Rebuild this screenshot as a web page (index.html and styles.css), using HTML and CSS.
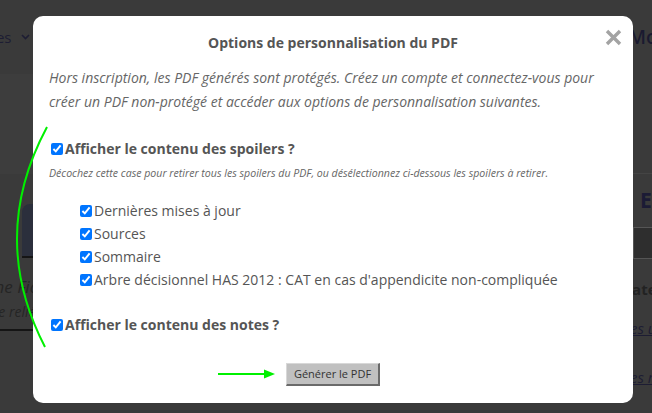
FILE: index.html
```html
<!DOCTYPE html>
<html lang="fr">

<head>
    <meta charset="UTF-8">
    <meta name="viewport" content="width=device-width, initial-scale=1.0">
    <title>Options PDF</title>
    <link rel="stylesheet" href="styles.css">
</head>

<body>
    <!-- page behind the modal (dimmed) -->
    <div class="page">
        <header class="topbar">
            <span class="nav-item">Fiches
                <svg width="9" height="6" viewBox="0 0 9 6"><path d="M1 1l3.5 3.5L8 1" fill="none" stroke="#1d1d33" stroke-width="1.6"/></svg>
            </span>
            <span class="account">Mon compte</span>
        </header>

        <div class="columns">
            <div class="col-left">
                <div class="hero"></div>
                <div class="card"></div>
                <p class="quote">Recherche Fiches</p>
                <p class="quote small">Recherche reliée</p>
            </div>
            <div class="col-mid"></div>
            <div class="col-right">
                <h3>En bref</h3>
                <div class="thumb"></div>
                <p class="meta">Date</p>
                <a href="#" class="side-link">Les fiches unies</a>
                <a href="#" class="side-link">Les fiches mises</a>
            </div>
        </div>
    </div>

    <div class="modal">
        <h2 class="modal-title">Options de personnalisation du PDF</h2>
        <button class="close" aria-label="Fermer">
            <svg width="17" height="17" viewBox="0 0 17 17"><path d="M2 2l13 13M15 2L2 15" stroke="#a3a3a3" stroke-width="3.4"/></svg>
        </button>

        <p class="intro">Hors inscription, les PDF générés sont protégés. Créez un compte et connectez-vous pour créer un PDF non-protégé et accéder aux options de personnalisation suivantes.</p>

        <label class="option"><input type="checkbox" checked>Afficher le contenu des spoilers ?</label>
        <p class="hint">Décochez cette case pour retirer tous les spoilers du PDF, ou désélectionnez ci-dessous les spoilers à retirer.</p>

        <ul class="spoilers">
            <li><label><input type="checkbox" checked>Dernières mises à jour</label></li>
            <li><label><input type="checkbox" checked>Sources</label></li>
            <li><label><input type="checkbox" checked>Sommaire</label></li>
            <li><label><input type="checkbox" checked>Arbre décisionnel HAS 2012 : CAT en cas d'appendicite non-compliquée</label></li>
        </ul>

        <label class="option notes"><input type="checkbox" checked>Afficher le contenu des notes ?</label>

        <div class="actions">
            <button class="generate">Générer le PDF</button>
        </div>
    </div>

    <!-- green annotation marks -->
    <svg class="marks" width="652" height="413" viewBox="0 0 652 413">
        <path d="M47 127Q-12 237 45 347" fill="none" stroke="#00f000" stroke-width="2"/>
        <path d="M218 374H266" stroke="#00f000" stroke-width="2"/>
        <path d="M264 369.5L275 374L264 378.5z" fill="#00f000"/>
    </svg>
</body>

</html>
```

FILE: styles.css
```css
html,
body {
    margin: 0;
    padding: 0;
    height: 100%;
    overflow: hidden;
}

body {
    font-family: "Open Sans", Arial, sans-serif;
    background-color: #3a3a3a;
    color: #555;
    position: relative;
}

/* dimmed page */

.topbar {
    height: 74px;
    display: flex;
    justify-content: space-between;
    align-items: center;
    margin-left: -32px;
    margin-right: -92px;
}

.nav-item {
    font-size: 15px;
    color: #1d1d33;
    display: flex;
    align-items: center;
    gap: 10px;
}

.account {
    font-size: 19px;
    font-weight: 600;
    color: #1a1a30;
}

.columns {
    display: grid;
    grid-template-columns: 110px 1fr 140px;
    margin-left: -70px;
    margin-right: -120px;
}

.col-left .hero {
    height: 100px;
    background: #3d3d3d;
}

.col-left .card {
    height: 52px;
    margin: 30px 0 0 92px;
    border-radius: 8px 0 0 0;
    background: #2b2f3c;
    border-bottom: 2px solid #151515;
}

.col-left .quote {
    margin: 17px 0 0 0;
    padding-left: 6px;
    font-style: italic;
    font-size: 17px;
    color: #252525;
    white-space: nowrap;
}

.col-left .quote.small {
    margin: 4px 0 0;
    padding: 0 0 8px 12px;
    font-size: 14px;
    border-bottom: 2px solid #151515;
}

.col-right {
    border-top: 1px solid #444;
    margin-top: 99px;
}

.col-right h3 {
    margin: 12px 0 0 8px;
    font-size: 21px;
    color: #1b1b35;
}

.col-right .thumb {
    margin: 13px 0 0 1px;
    width: 90px;
    height: 30px;
    border: 1px solid #555;
    background: #2e2e2e;
}

.col-right .meta {
    margin: 20px 0 0 -11px;
    font-weight: 700;
    font-size: 15px;
    color: #222;
}

.side-link {
    display: block;
    margin: 19px 0 0 -51px;
    font-style: italic;
    font-size: 15px;
    color: #1d1d33;
    white-space: nowrap;
}

.side-link+.side-link {
    margin-top: 29px;
}

/* modal */

.modal {
    position: absolute;
    top: 16px;
    left: 33px;
    width: 568px;
    padding: 17px 16px 17px;
    background: #fff;
    border-radius: 10px;
}

.modal-title {
    margin: 0;
    text-align: center;
    font-size: 14px;
    line-height: 20px;
    font-weight: 700;
    color: #555;
}

.close {
    position: absolute;
    top: 13px;
    right: 11px;
    padding: 0;
    border: 0;
    background: none;
}

.intro {
    margin: 13px 0 25px;
    font-style: italic;
    font-size: 14px;
    line-height: 24px;
    color: #666;
}

.option {
    display: flex;
    align-items: center;
    font-size: 14px;
    line-height: 20px;
    font-weight: 700;
    color: #555;
}

input[type="checkbox"] {
    width: 12px;
    height: 12px;
    margin: 0 2px 0 2px;
}

.hint {
    margin: 7px 0 19px;
    font-style: italic;
    font-size: 10.6px;
    line-height: 14px;
    color: #666;
}

.spoilers {
    list-style: none;
    margin: 0 0 24px;
    padding: 0 0 0 29px;
}

.spoilers label {
    display: flex;
    align-items: center;
    font-size: 14px;
    line-height: 23px;
    color: #555;
}

.actions {
    margin-top: 26px;
    text-align: center;
}

.generate {
    height: 23px;
    padding: 0 7px;
    font-family: "Open Sans", Arial, sans-serif;
    font-size: 11px;
    color: #333;
    background: #c0c0c0;
    border-style: solid;
    border-width: 1px 2px 2px 1px;
    border-color: #d8d8d8 #6a6a6a #6a6a6a #d8d8d8;
}

.marks {
    position: absolute;
    top: 0;
    left: 0;
    pointer-events: none;
}
```
